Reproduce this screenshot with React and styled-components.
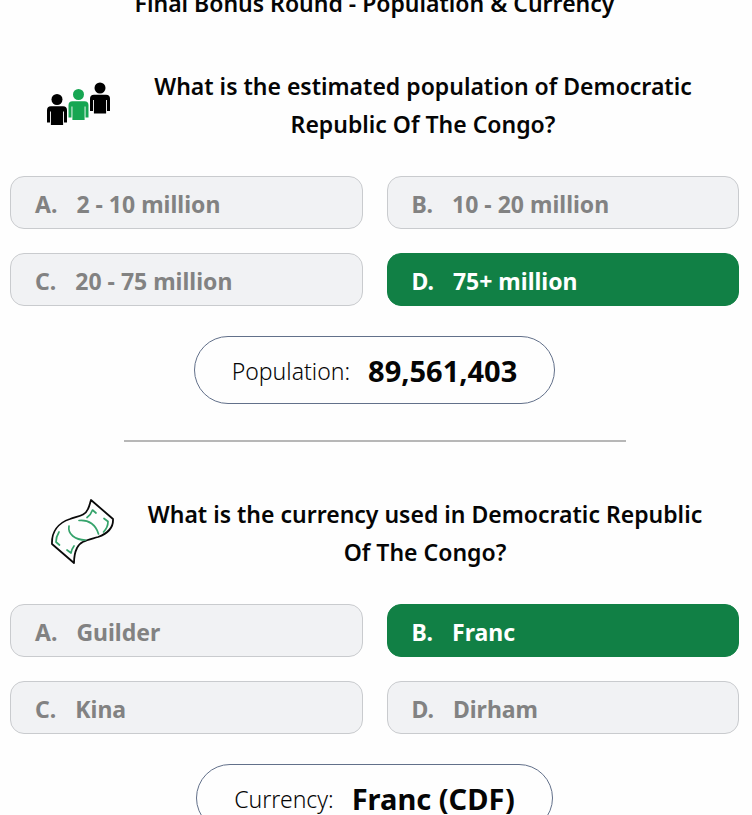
import React from 'react';
import styled, { createGlobalStyle } from 'styled-components';

const GlobalStyle = createGlobalStyle`
  *, *::before, *::after { box-sizing: border-box; }
  body {
    margin: 0;
    background: #fefefe;
    color: #050505;
    font-family: "Noto Sans", "Open Sans", sans-serif;
  }
`;

const Page = styled.main`
  height: 100vh;
  overflow: hidden;
  padding: 0 13px 0 10px;
`;

const RoundTitle = styled.h1`
  margin: -16px 0 42px;
  font-size: 23px;
  font-weight: 600;
  line-height: 38px;
  text-align: center;
`;

const Section = styled.section`
  display: flex;
  flex-direction: column;
`;

const QuestionRow = styled.div`
  display: flex;
  align-items: center;
  gap: 18px;
  padding: 3px 22px 0 ${(p) => p.$inset}px;
  margin-bottom: 33px;
`;

const Question = styled.h2`
  flex: 1;
  margin: 0;
  font-size: 23px;
  font-weight: 600;
  line-height: 38px;
  text-align: center;
`;

const Icon = styled.svg`
  flex: none;
  display: block;
  width: 64px;
  height: 68px;
`;

const Options = styled.div`
  display: grid;
  grid-template-columns: 1fr 1fr;
  gap: 24px;
`;

const Option = styled.button`
  display: flex;
  align-items: center;
  gap: 19px;
  height: 53px;
  padding: 2px 24px 0;
  border: 1px solid ${(p) => (p.$correct ? '#118045' : '#c9cbce')};
  border-radius: 14px;
  background: ${(p) => (p.$correct ? '#118045' : '#f1f2f4')};
  color: ${(p) => (p.$correct ? '#ffffff' : '#828282')};
  font-family: inherit;
  font-size: 23px;
  font-weight: 700;
  line-height: 32px;
  text-align: left;
`;

const Answer = styled.p`
  display: flex;
  align-items: center;
  align-self: center;
  gap: 18px;
  height: 68px;
  margin: 30px 0 0;
  padding: 2px 37px 0;
  border: 1px solid #62708a;
  border-radius: 34px;
  line-height: 40px;
`;

const AnswerLabel = styled.span`
  font-size: 23px;
  font-weight: 300;
`;

const AnswerValue = styled.strong`
  font-size: 29px;
  font-weight: 700;
`;

const Divider = styled.hr`
  width: 502px;
  max-width: 80%;
  height: 2px;
  margin: 36px auto 50px;
  border: 0;
  background: #b7b7b7;
`;

const Person = ({ x, y, color }) => (
  <g transform={`translate(${x} ${y})`} fill={color}>
    <circle cx="10" cy="5.5" r="5.5" />
    <path d="M4 12.3h12a4 4 0 0 1 4 4V28.5h-3V17.5h-.9V31H3.9V17.5H3V28.5H0V16.3a4 4 0 0 1 4-4z" />
  </g>
);

const PeopleIcon = () => (
  <Icon viewBox="0 0 64 68" aria-hidden="true">
    <Person x={0} y={23} color="#000" />
    <Person x={21.5} y={18} color="#16a652" />
    <Person x={43} y={11.5} color="#000" />
  </Icon>
);

const BanknoteIcon = () => (
  <Icon viewBox="0 0 64 68" fill="none" strokeLinejoin="round" strokeLinecap="round" aria-hidden="true">
    <path
      d="M40 1L62 20C62.500 28 58 34 47 38C37 41 29 42 26 49C24 53 23 58 23 64L1 45C.5 33 7 24 19 20C27 17 34 17 37 10C38.500 7 39 4 40 1Z"
      stroke="#0a0a0a"
      strokeWidth="1.8"
    />
    <g stroke="#35a36b" strokeWidth="1.7">
      <path d="M28 21.500C38 20.500 45 26 47.500 35" />
      <path d="M18 27C16.500 35 24 41 34.500 41" />
      <path d="M36 18.500C39 16.500 40.500 14 41.500 11L45 14" />
      <path d="M53 19.500L57 22.500C57 27 55.500 30 52.500 33" />
      <path d="M8 33C5.500 37 5 40 5 43L8.500 46" />
      <path d="M16 51L20 54C20.500 51 21.500 49 23 47" />
    </g>
  </Icon>
);

const QUESTIONS = [
  {
    text: 'What is the estimated population of Democratic Republic Of The Congo?',
    icon: PeopleIcon,
    inset: 37,
    options: ['2 - 10 million', '10 - 20 million', '20 - 75 million', '75+ million'],
    correct: 3,
    label: 'Population:',
    value: '89,561,403',
  },
  {
    text: 'What is the currency used in Democratic Republic Of The Congo?',
    icon: BanknoteIcon,
    inset: 41,
    options: ['Guilder', 'Franc', 'Kina', 'Dirham'],
    correct: 1,
    label: 'Currency:',
    value: 'Franc (CDF)',
  },
];

const QuestionSection = ({ question }) => {
  const QuestionIcon = question.icon;
  return (
    <Section>
      <QuestionRow $inset={question.inset}>
        <QuestionIcon />
        <Question>{question.text}</Question>
      </QuestionRow>
      <Options>
        {question.options.map((option, i) => (
          <Option key={option} type="button" $correct={i === question.correct}>
            <span>{'ABCD'[i]}.</span>
            <span>{option}</span>
          </Option>
        ))}
      </Options>
      <Answer>
        <AnswerLabel>{question.label}</AnswerLabel>
        <AnswerValue>{question.value}</AnswerValue>
      </Answer>
    </Section>
  );
};

export default function App() {
  return (
    <>
      <GlobalStyle />
      <Page>
        <RoundTitle>Final Bonus Round - Population &amp; Currency</RoundTitle>
        <QuestionSection question={QUESTIONS[0]} />
        <Divider />
        <QuestionSection question={QUESTIONS[1]} />
      </Page>
    </>
  );
}
